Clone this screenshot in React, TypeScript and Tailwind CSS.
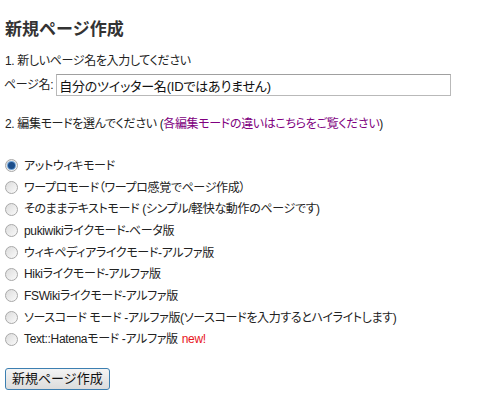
import React, { useState } from 'react';

const MODES = [
  { id: 'atwiki', label: 'アットウィキモード' },
  { id: 'wordpro', label: 'ワープロモード（ワープロ感覚でページ作成）' },
  { id: 'text', label: 'そのままテキストモード (シンプル/軽快な動作のページです)' },
  { id: 'pukiwiki', label: 'pukiwikiライクモード-ベータ版' },
  { id: 'wikipedia', label: 'ウィキペディアライクモード-アルファ版' },
  { id: 'hiki', label: 'Hikiライクモード-アルファ版' },
  { id: 'fswiki', label: 'FSWikiライクモード-アルファ版' },
  { id: 'source', label: 'ソースコード モード -アルファ版(ソースコードを入力するとハイライトします)' },
  { id: 'hatena', label: 'Text::Hatenaモード -アルファ版', isNew: true },
];

const Radio: React.FC<{ checked: boolean }> = ({ checked }) => (
  <span className="relative inline-flex h-[13px] w-[13px] shrink-0 items-center justify-center rounded-full border border-[#a8a8a8] bg-gradient-to-br from-[#dcdcdc] to-[#fafafa]">
    {checked && (
      <span className="h-[7px] w-[7px] rounded-full bg-[#1d4e8a] ring-1 ring-[#6ea3d8]"></span>
    )}
  </span>
);

const App: React.FC = () => {
  const [mode, setMode] = useState('atwiki');
  const [name, setName] = useState('自分のツイッター名(IDではありません)');

  return (
    <div className="w-[501px] h-[401px] bg-white px-[5px] text-[12px] tracking-[-0.35px] text-[#222] [font-family:'Liberation_Sans','Noto_Sans_CJK_JP',sans-serif] [font-feature-settings:'palt']">
      <h2 className="pt-[20px] text-[17px] font-bold leading-[20px] tracking-normal text-[#333] [font-feature-settings:normal]">新規ページ作成</h2>

      <div className="mt-[13px] leading-[16px]">1. 新しいページ名を入力してください</div>
      <div className="mt-[5px] flex items-center gap-[3px] -ml-[1px]">
        <span>ページ名:</span>
        <input
          value={name}
          onChange={(e) => setName(e.target.value)}
          className="h-[22px] w-[395px] border border-[#b9b9b9] border-t-[#a0a0a0] bg-white px-[2px] text-[13px] tracking-[-0.2px] text-[#111] outline-none"
        />
      </div>

      <div className="mt-[20px] leading-[16px]">
        2. 編集モードを選んでください (<a href="#" className="text-[#800080]">各編集モードの違いはこちらをご覧ください</a>)
      </div>

      <div className="mt-[23px] flex flex-col">
        {MODES.map((m) => (
          <label
            key={m.id}
            onClick={() => setMode(m.id)}
            className="flex h-[21.7px] cursor-pointer items-center gap-[6px]"
          >
            <Radio checked={mode === m.id} />
            <span>
              {m.label}
              {m.isNew && <span className="ml-[4px] text-[#e8141c]">new!</span>}
            </span>
          </label>
        ))}
      </div>

      <button className="mt-[18px] h-[22px] rounded-[3px] border border-[#3c7fb1] bg-gradient-to-b from-[#f4f4f4] to-[#dcdcdc] px-[6px] text-[13px] leading-[18px] tracking-normal text-[#111] [font-feature-settings:normal]">
        新規ページ作成
      </button>
    </div>
  );
};

export default App;
